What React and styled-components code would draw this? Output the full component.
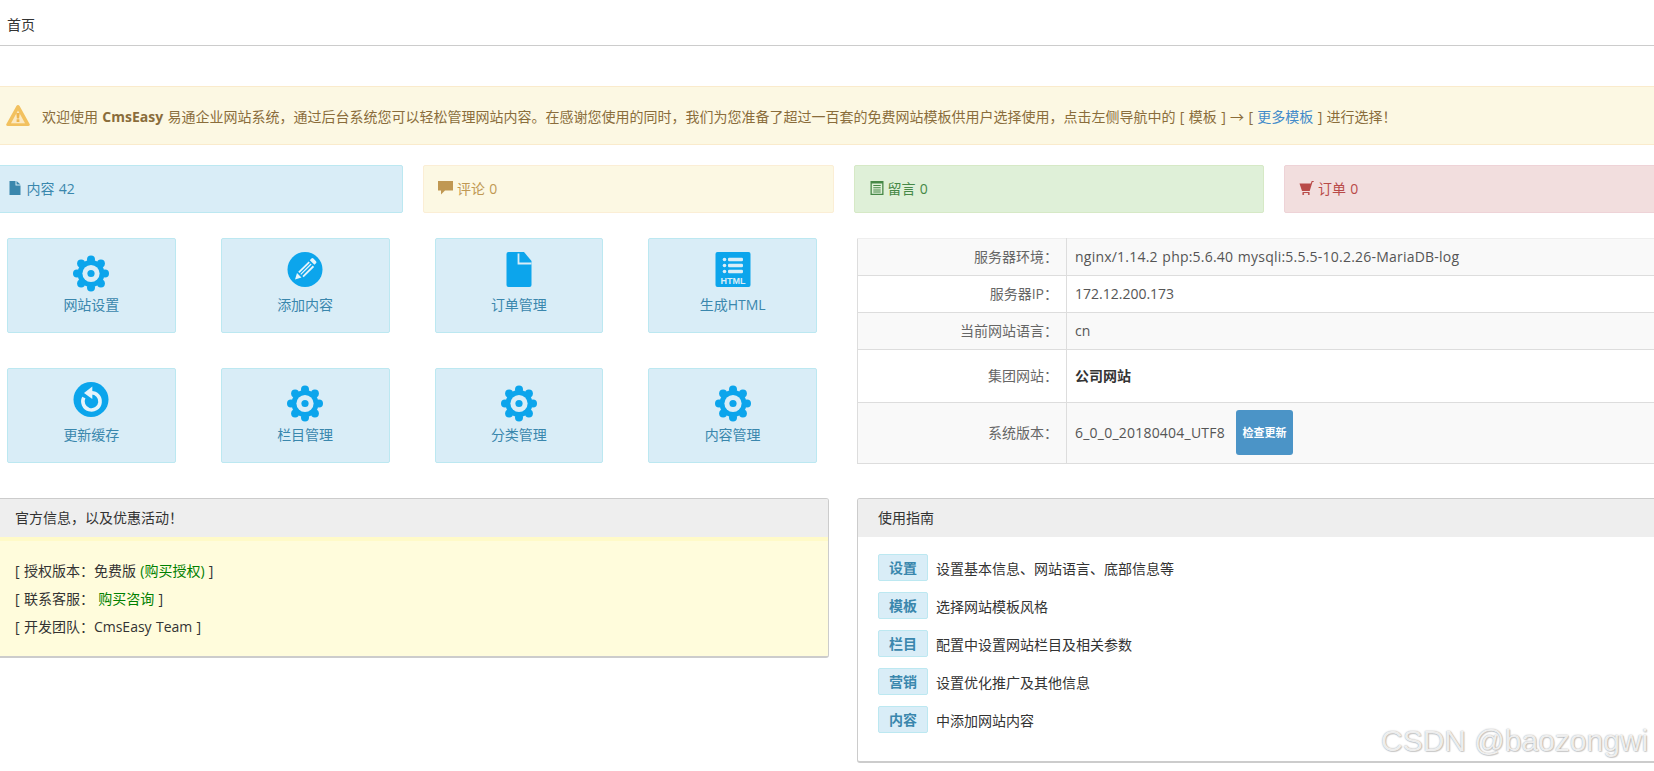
import React from "react";
import styled, { createGlobalStyle } from "styled-components";

const tiles = [
    { label: "网站设置", icon: "gear" },
    { label: "添加内容", icon: "pen" },
    { label: "订单管理", icon: "file" },
    { label: "生成HTML", icon: "html" },
    { label: "更新缓存", icon: "refresh" },
    { label: "栏目管理", icon: "gear" },
    { label: "分类管理", icon: "gear" },
    { label: "内容管理", icon: "gear" },
];

const guides = [
    { tag: "设置", text: "设置基本信息、网站语言、底部信息等" },
    { tag: "模板", text: "选择网站模板风格" },
    { tag: "栏目", text: "配置中设置网站栏目及相关参数" },
    { tag: "营销", text: "设置优化推广及其他信息" },
    { tag: "内容", text: "中添加网站内容" },
];

const BLUE = "#0ca5ec";
const TILE = "#d9edf7";

function TileIcon({ name }) {
    if (name === "gear") {
        const teeth = [0, 45, 90, 135, 180, 225, 270, 315];
        return (
            <svg width="36" height="40" viewBox="0 0 36 40">
                <g transform="translate(18 21.5)">
                    <circle r="13.5" fill={BLUE} />
                    {teeth.map(a => (
                        <circle
                            key={a}
                            cx={14 * Math.cos((a * Math.PI) / 180)}
                            cy={-14 * Math.sin((a * Math.PI) / 180)}
                            r="4"
                            fill={BLUE}
                        />
                    ))}
                    <circle r="8.6" fill={TILE} />
                    <circle r="3.6" fill={BLUE} />
                </g>
            </svg>
        );
    }
    if (name === "pen") {
        return (
            <svg width="36" height="40" viewBox="0 0 36 40">
                <circle cx="18" cy="17.5" r="17.5" fill={BLUE} />
                <path
                    d="M8 27.500l2-6.500 4.500 4.500zM11.200 19.800L21.600 9.400l1.300 1.300-10.400 10.400zM13.300 21.900L23.700 11.500l.9.900-10.400 10.400zM15.400 24L25.800 13.600l1.300 1.300-10.400 10.400zM22.800 8.200l1.600-1.600a1.400 1.400 0 0 1 2 0l2.600 2.600a1.400 1.400 0 0 1 0 2l-1.600 1.600z"
                    fill="#e6f4fb"
                />
            </svg>
        );
    }
    if (name === "file") {
        return (
            <svg width="36" height="40" viewBox="0 0 36 40">
                <path
                    d="M7.500 0H23l7.500 9v24a2 2 0 0 1-2 2h-21a2 2 0 0 1-2-2V2a2 2 0 0 1 2-2z"
                    fill={BLUE}
                />
                <path d="M17.500 1.500v10h13" fill="none" stroke={TILE} strokeWidth="1.8" />
            </svg>
        );
    }
    if (name === "html") {
        return (
            <svg width="36" height="40" viewBox="0 0 36 40">
                <rect x="0.5" width="35" height="35" rx="2" fill={BLUE} />
                <g fill={TILE}>
                    <circle cx="9.500" cy="7.500" r="1.800" />
                    <circle cx="9.500" cy="13.500" r="1.800" />
                    <circle cx="9.500" cy="19.500" r="1.800" />
                    <rect x="13" y="5.800" width="15" height="3.400" rx="1.200" />
                    <rect x="13" y="11.800" width="15" height="3.400" rx="1.200" />
                    <rect x="13" y="17.800" width="15" height="3.400" rx="1.200" />
                </g>
                <text
                    x="18"
                    y="31.500"
                    textAnchor="middle"
                    fontFamily="Liberation Sans Narrow, Liberation Sans, sans-serif"
                    fontSize="9"
                    fontWeight="700"
                    fill={TILE}
                >
                    HTML
                </text>
            </svg>
        );
    }
    return (
        <svg width="36" height="40" viewBox="0 0 36 40">
            <circle cx="18" cy="17.5" r="17.5" fill={BLUE} />
            <path
                d="M10.800 15.500a8.600 8.600 0 1 0 7.200-4.700"
                fill="none"
                stroke="#e6f4fb"
                strokeWidth="3.600"
            />
            <path d="M19.300 4.500v12.500l-8.300-6z" fill="#e6f4fb" />
        </svg>
    );
}

function StatIcon({ name, color }) {
    if (name === "file") {
        return (
            <svg width="16" height="14" viewBox="0 0 16 14">
                <path d="M1.500 0h6v4.500H12.500V14h-11zM8.500 0l4 3.500h-4z" fill={color} />
            </svg>
        );
    }
    if (name === "comment") {
        return (
            <svg width="16" height="14" viewBox="0 0 16 14">
                <path d="M0 0h15v9.500H7L3 13.500V9.500H0z" fill={color} />
            </svg>
        );
    }
    if (name === "list") {
        return (
            <svg width="16" height="14" viewBox="0 0 16 14">
                <path
                    d="M1.500 0h13v14h-13zM2.800 2.400v10.300h10.400V2.400zM4.300 4h7.400v1H4.300zM4.300 6.200h7.400v1H4.300zM4.300 8.400h7.400v1H4.300zM4.300 10.600h7.400v1H4.300z"
                    fill={color}
                    fillRule="evenodd"
                />
            </svg>
        );
    }
    return (
        <svg width="16" height="14" viewBox="0 0 16 14">
            <path
                d="M.500 2.500h11.300L12.700 0h2v1h-1.200l-2.800 9H3zM3.500 11h7v1h-7z"
                fill={color}
            />
            <circle cx="4.200" cy="13" r="1" fill={color} />
            <circle cx="9.800" cy="13" r="1" fill={color} />
        </svg>
    );
}

export default function App() {
    return (
        <Page>
            <GlobalStyle />
            <TopBar>首页</TopBar>

            <Notice>
                <svg width="24" height="21" viewBox="0 0 24 21">
                    <path d="M12 3L3.500 18.500h17z" fill="#fbe9c2" />
                    <path
                        d="M12 0c.7 0 1.200.4 1.600 1l10 18c.6 1.100 0 2-1.200 2H1.600C.4 21-.2 20.100.4 19l10-18c.4-.6.900-1 1.600-1zM12 5.500L5 18.200h14z"
                        fill="#f2c15f"
                        fillRule="evenodd"
                    />
                    <path d="M10.300 8l.6 5.500h2.200l.6-5.500zM10.600 14.300v2.800h2.800v-2.800z" fill="#eeb54d" />
                </svg>
                <NoticeText>
                    欢迎使用 <b>CmsEasy</b> 易通企业网站系统，通过后台系统您可以轻松管理网站内容。在感谢您使用的同时，我们为您准备了超过一百套的免费网站模板供用户选择使用，点击左侧导航中的 [ 模板 ] → [ <a href="#more">更多模板</a> ] 进行选择！
                </NoticeText>
            </Notice>

            <Stats>
                <Stat $bg="#d9edf7" $line="#bce8f1" $color="#3a87ad">
                    <StatIcon name="file" color="#3a87ad" />
                    内容 42
                </Stat>
                <Stat $bg="#fcf8e3" $line="#fbeed5" $color="#c09853">
                    <StatIcon name="comment" color="#c09853" />
                    评论 0
                </Stat>
                <Stat $bg="#dff0d8" $line="#d6e9c6" $color="#468847">
                    <StatIcon name="list" color="#468847" />
                    留言 0
                </Stat>
                <Stat $bg="#f2dede" $line="#eed3d7" $color="#b94a48">
                    <StatIcon name="cart" color="#b94a48" />
                    订单 0
                </Stat>
            </Stats>

            <MainRow>
                <Tiles>
                    {tiles.map(t => (
                        <Tile key={t.label + t.icon} href="#tile">
                            <TileIcon name={t.icon} />
                            <span>{t.label}</span>
                        </Tile>
                    ))}
                </Tiles>
                <InfoTable>
                    <tbody>
                        <InfoRow $h={37}>
                            <th>服务器环境：</th>
                            <td>
                                <WideText>nginx/1.14.2 php:5.6.40 mysqli:5.5.5-10.2.26-MariaDB-log</WideText>
                            </td>
                        </InfoRow>
                        <InfoRow $h={37}>
                            <th>服务器IP：</th>
                            <td>172.12.200.173</td>
                        </InfoRow>
                        <InfoRow $h={37}>
                            <th>当前网站语言：</th>
                            <td>cn</td>
                        </InfoRow>
                        <InfoRow $h={53}>
                            <th>集团网站：</th>
                            <td>
                                <strong>公司网站</strong>
                            </td>
                        </InfoRow>
                        <InfoRow $h={61}>
                            <th>系统版本：</th>
                            <td>
                                <VersionLine>
                                    <WideText>6_0_0_20180404_UTF8</WideText>
                                    <CheckButton>检查更新</CheckButton>
                                </VersionLine>
                            </td>
                        </InfoRow>
                    </tbody>
                </InfoTable>
            </MainRow>

            <BottomRow>
                <Panel $w={839} $h={160}>
                    <PanelHead>官方信息，以及优惠活动！</PanelHead>
                    <OfficialBody>
                        <div>
                            [ 授权版本：免费版 <GreenLink href="#buy">(购买授权)</GreenLink> ]
                        </div>
                        <div>
                            [ 联系客服： <GreenLink href="#ask">购买咨询</GreenLink> ]
                        </div>
                        <div>[ 开发团队：CmsEasy Team ]</div>
                    </OfficialBody>
                </Panel>
                <Panel $w={830} $h={265}>
                    <PanelHead $guide>使用指南</PanelHead>
                    <GuideBody>
                        {guides.map(g => (
                            <GuideRow key={g.tag}>
                                <GuideTag>{g.tag}</GuideTag>
                                {g.text}
                            </GuideRow>
                        ))}
                    </GuideBody>
                </Panel>
            </BottomRow>

            <Watermark>CSDN @baozongwi</Watermark>
        </Page>
    );
}

//------스타일 컴포넌트------
const GlobalStyle = createGlobalStyle`
    html, body {
        margin: 0;
        height: 100%;
        overflow: hidden;
        background: #fff;
    }
    * {
        box-sizing: border-box;
    }
`;

const Page = styled.div`
    position: relative;
    width: 1654px;
    height: 771px;
    overflow: hidden;
    font-family: "Open Sans", "Noto Sans CJK SC", sans-serif;
    font-size: 14px;
    word-spacing: 0.7px;
    color: #333;
`;

const TopBar = styled.div`
    height: 46px;
    padding: 16px 7px 0;
    line-height: 18px;
    font-size: 14px;
    color: #333;
    border-bottom: 1.5px solid #ccc;
`;

const Notice = styled.div`
    margin-top: 40px;
    height: 59px;
    padding-left: 6px;
    display: flex;
    align-items: center;
    gap: 12px;
    background: #fcf8e3;
    border-top: 1px solid #faebcc;
    border-bottom: 1px solid #faebcc;
    color: #8a6d3b;
`;

const NoticeText = styled.div`
    white-space: nowrap;
    b {
        font-weight: 700;
    }
    a {
        color: #428bca;
        text-decoration: none;
    }
`;

const Stats = styled.div`
    margin: 20px 0 0 -7.5px;
    width: 1701px;
    display: grid;
    grid-template-columns: repeat(4, 410.5px);
    column-gap: 20px;
`;

const Stat = styled.div`
    height: 48px;
    padding: 0 0 3px 14px;
    display: flex;
    align-items: center;
    gap: 3px;
    background: ${props => props.$bg};
    border: 1px solid ${props => props.$line};
    border-radius: 2px;
    color: ${props => props.$color};
    svg {
        margin-top: 1px;
    }
`;

const MainRow = styled.div`
    margin-top: 25px;
    padding-left: 7px;
    display: flex;
    gap: 41px;
`;

const Tiles = styled.div`
    width: 809px;
    flex: none;
    display: grid;
    grid-template-columns: repeat(4, 168.75px);
    grid-auto-rows: 95px;
    column-gap: 45px;
    row-gap: 35px;
`;

const Tile = styled.a`
    padding-top: 13px;
    display: flex;
    flex-direction: column;
    align-items: center;
    background: #d9edf7;
    border: 1px solid #bce8f1;
    border-radius: 2px;
    color: #3a87ad;
    text-decoration: none;
    line-height: 26px;
    svg {
        display: block;
    }
`;

const InfoTable = styled.table`
    width: 830px;
    flex: none;
    height: 225px;
    border-collapse: collapse;
    table-layout: fixed;
    color: #555;
    border: 1px solid #ddd;
    border-top-color: #eee;
    border-right: 0;
`;

const InfoRow = styled.tr`
    height: ${props => props.$h}px;
    border-bottom: 1px solid #ddd;
    &:nth-child(odd) {
        background: #f9f9f9;
    }
    th {
        width: 209px;
        padding: 0 8px 2px;
        text-align: right;
        font-weight: 400;
        color: #666;
        border-right: 1px solid #ddd;
    }
    td {
        padding: 0 8px 2px;
    }
    strong {
        color: #333;
    }
`;

const WideText = styled.span`
    letter-spacing: 0.22px;
`;

const VersionLine = styled.div`
    display: flex;
    align-items: center;
    gap: 11px;
`;

const CheckButton = styled.button`
    width: 57px;
    height: 45px;
    padding: 0;
    background: #4b94c7;
    border: 0;
    border-radius: 3px;
    color: #fff;
    font: 700 11px "Open Sans", "Noto Sans CJK SC", sans-serif;
`;

const BottomRow = styled.div`
    margin: 34px 0 0 -10px;
    display: flex;
    gap: 28px;
    align-items: flex-start;
`;

const Panel = styled.div`
    width: ${props => props.$w}px;
    height: ${props => props.$h}px;
    flex: none;
    display: flex;
    flex-direction: column;
    background: #fff;
    border: 1px solid #ccc;
    border-bottom: 2px solid #ccc;
    border-radius: 3px;
    overflow: hidden;
`;

const PanelHead = styled.div`
    height: 38px;
    flex: none;
    padding-left: ${props => (props.$guide ? "20px" : "24px")};
    line-height: 37px;
    background: #eee;
    color: #333;
`;

const OfficialBody = styled.div`
    flex: 1;
    padding-top: 16px;
    padding-left: 24px;
    line-height: 28px;
    background: #fffcdc;
    border-top: 4px solid #fffac8;
    color: #333;
`;

const GreenLink = styled.a`
    color: #008000;
    text-decoration: none;
`;

const GuideBody = styled.div`
    padding: 17px 0 0 20px;
    display: flex;
    flex-direction: column;
    gap: 11px;
    color: #333;
`;

const GuideRow = styled.div`
    height: 27px;
    display: flex;
    align-items: center;
    gap: 8px;
`;

const GuideTag = styled.span`
    width: 50px;
    height: 27px;
    line-height: 25px;
    text-align: center;
    font-weight: 700;
    color: #3a87ad;
    background: #d9edf7;
    border: 1px solid #bce8f1;
    border-radius: 2px;
`;

const Watermark = styled.div`
    position: absolute;
    left: 1381px;
    top: 722px;
    font: 30px/38px "Liberation Sans", sans-serif;
    word-spacing: 0;
    white-space: nowrap;
    color: rgba(250, 250, 250, 0.9);
    text-shadow: 0 0 1.5px rgba(0, 0, 0, 0.4), 1px 1px 1px rgba(0, 0, 0, 0.15);
`;
